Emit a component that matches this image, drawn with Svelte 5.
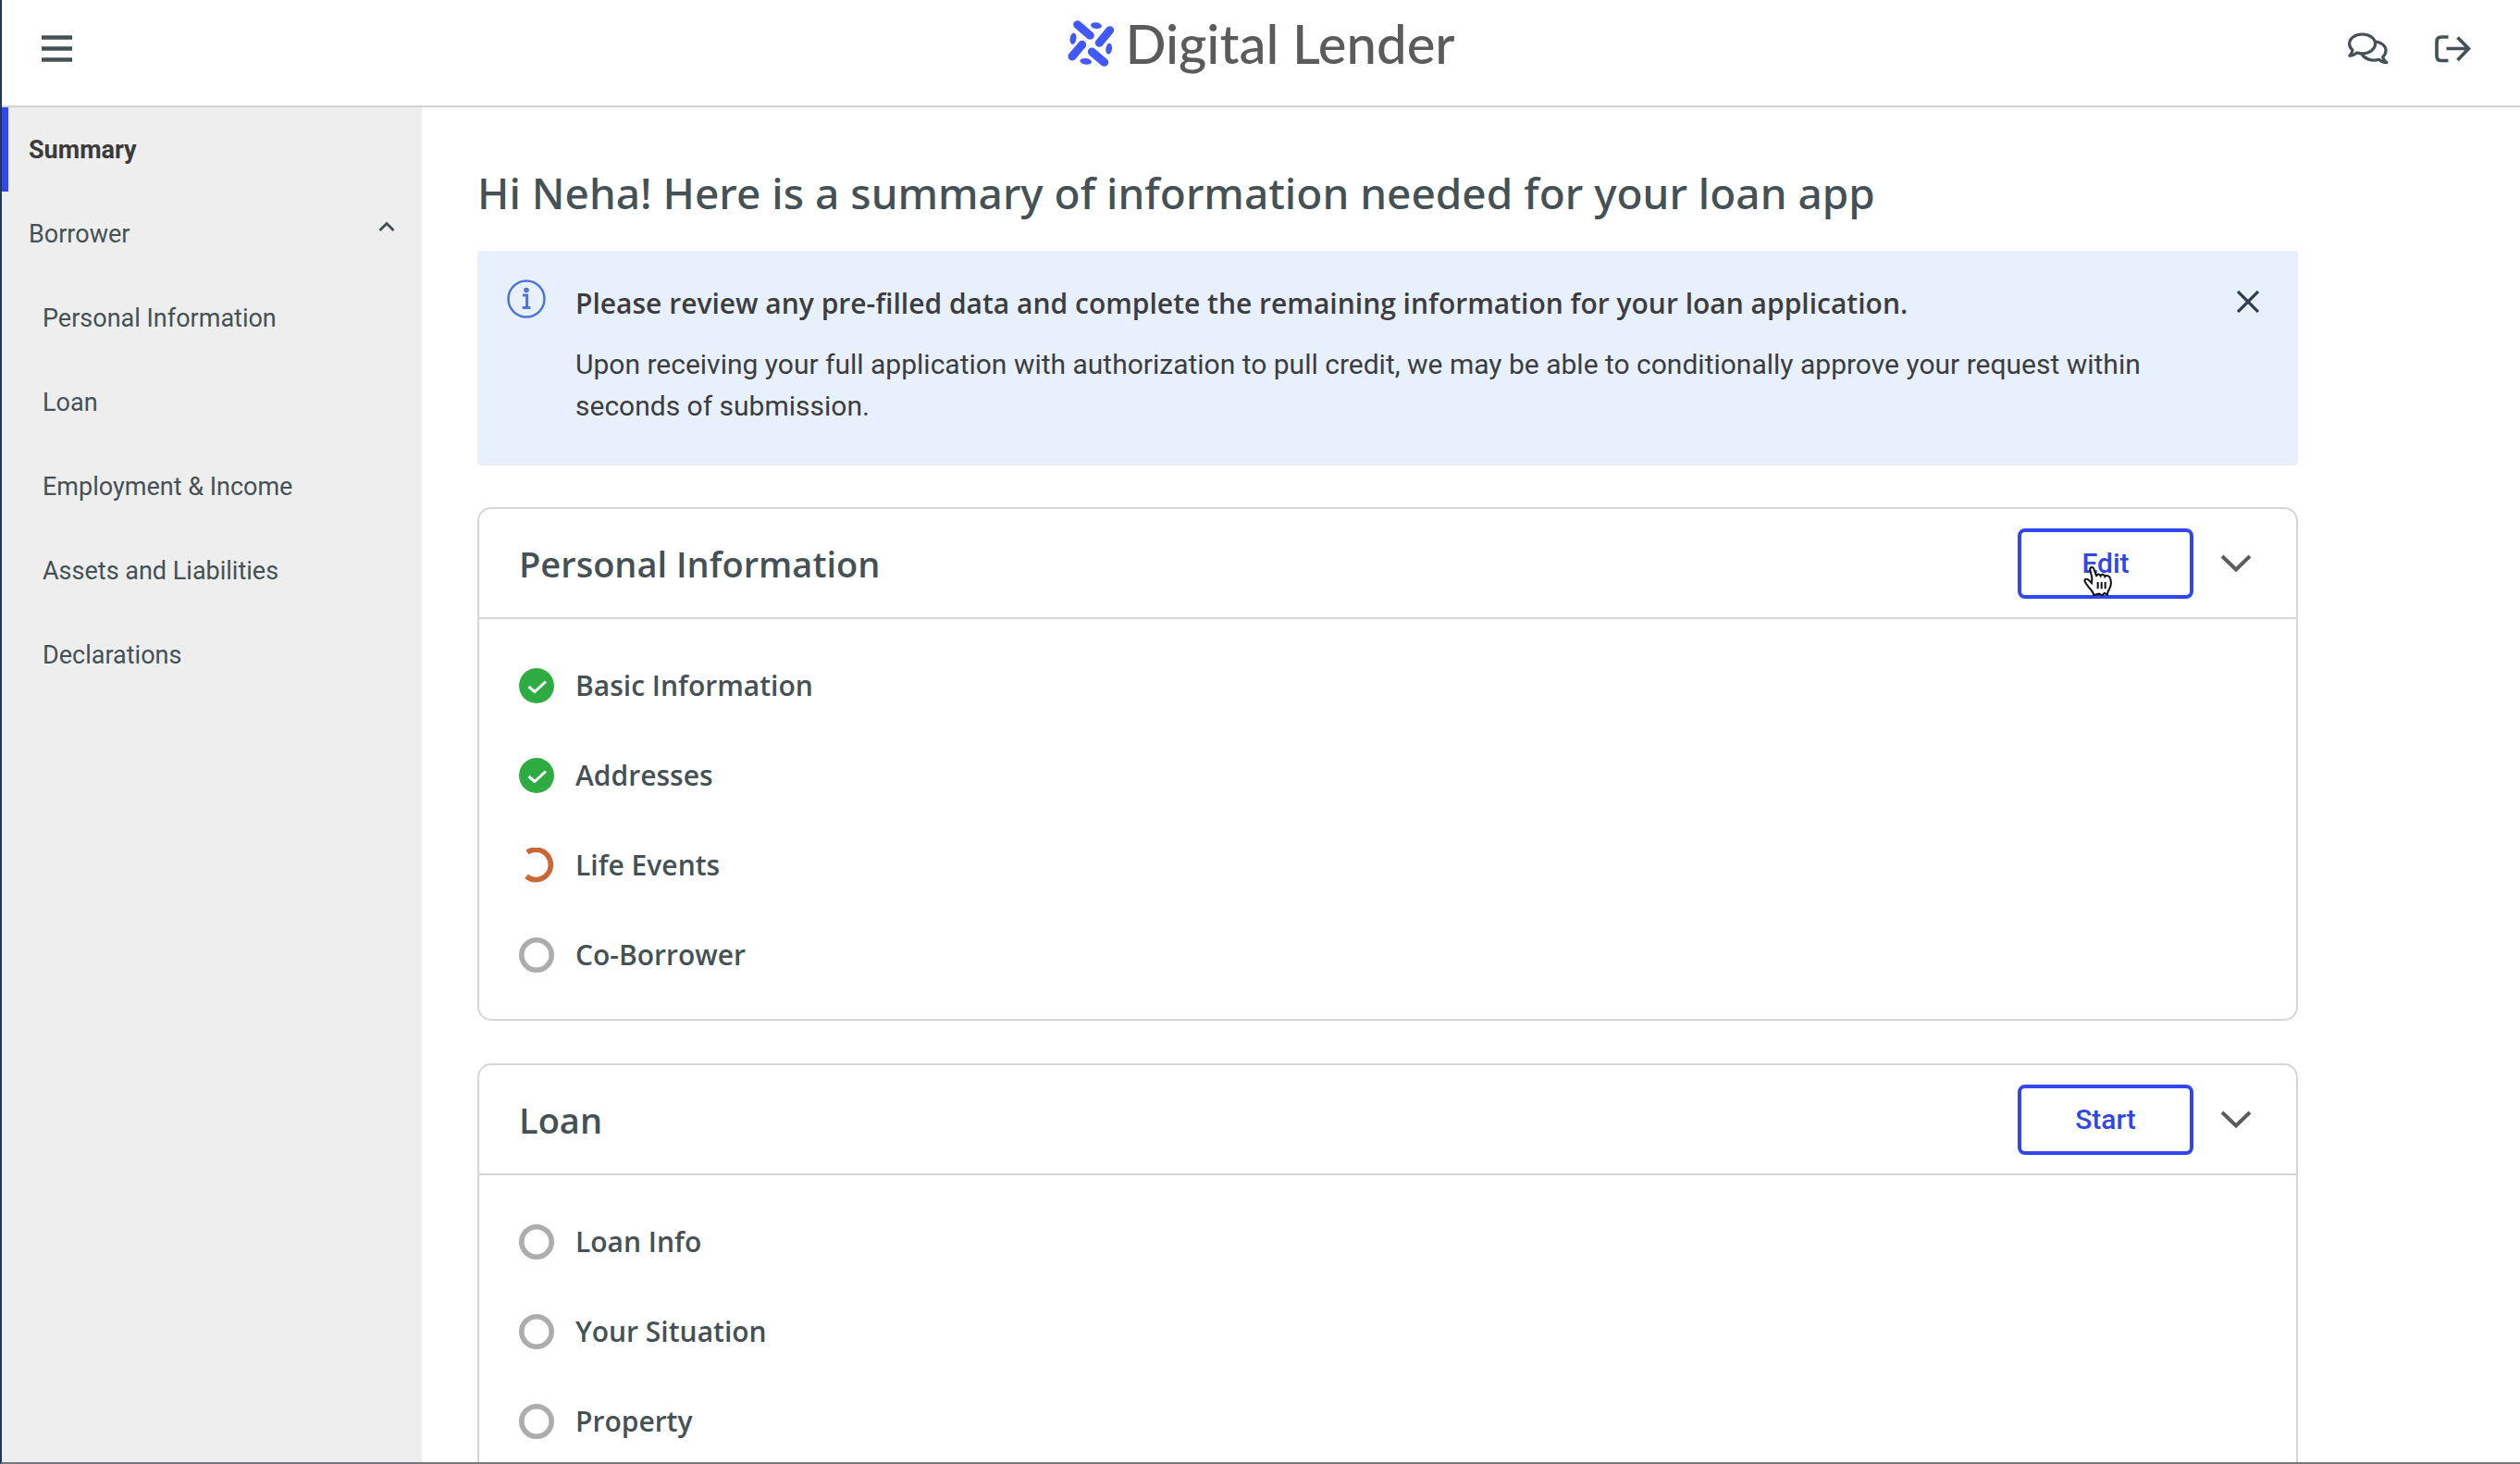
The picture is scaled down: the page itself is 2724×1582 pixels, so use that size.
<script>
  const links = ['Personal Information', 'Loan', 'Employment & Income', 'Assets and Liabilities', 'Declarations'];
  const cards = [
    {
      title: 'Personal Information',
      action: 'Edit',
      items: [
        { label: 'Basic Information', state: 'done' },
        { label: 'Addresses', state: 'done' },
        { label: 'Life Events', state: 'partial' },
        { label: 'Co-Borrower', state: 'todo' }
      ]
    },
    {
      title: 'Loan',
      action: 'Start',
      items: [
        { label: 'Loan Info', state: 'todo' },
        { label: 'Your Situation', state: 'todo' },
        { label: 'Property', state: 'todo' }
      ]
    }
  ];
</script>

<div class="window">
  <header>
    <button class="icon" aria-label="Menu">
      <svg width="34" height="30" viewBox="0 0 34 30"><path d="M0 2.5h33M0 14.5h33M0 26.5h33" stroke-width="4.6" /></svg>
    </button>
    <a class="brand" href="#home">
      <svg width="54" height="54" viewBox="70 62 162 162" aria-hidden="true">
        <g stroke="#4259fa" stroke-width="27" stroke-linecap="round">
          <path d="M105 82l41 35M210 100l-34 41M120 147l-32 38M152 170l40 34" />
        </g>
        <g fill="#4259fa">
          <ellipse cx="166" cy="85" rx="18" ry="10" transform="rotate(8 166 85)" />
          <ellipse cx="91" cy="127" rx="10" ry="19" transform="rotate(8 91 127)" />
          <ellipse cx="207" cy="160" rx="10" ry="18" transform="rotate(8 207 160)" />
          <ellipse cx="132" cy="201" rx="19" ry="10" transform="rotate(8 132 201)" />
        </g>
      </svg>
      <span>Digital Lender</span>
    </a>
    <div class="tools">
      <button class="icon" aria-label="Messages">
        <svg width="44" height="36" viewBox="0 0 44 36" stroke-width="3.2" stroke-linejoin="round">
          <path d="M15.500 2C23.500 2 29.500 6.500 29.500 12.300S23.500 22.800 15.500 22.800C13.500 22.800 11.500 22.500 9.800 21.900C7.500 24 5 25.100 1.800 25.200C3.500 23.200 4.600 21.400 5 19.200C2.800 17.300 1.600 15 1.600 12.300C1.600 6.500 7.600 2 15.500 2Z" />
          <path d="M29.300 9.800C36.200 10.600 41 14.600 41 19.600C41 22.400 39.800 24.700 37.700 26.500C38 28.700 39.400 30.600 41.800 32.500C38.500 32.500 35.500 31.300 33.300 29.300C25.800 31.500 17.800 28.700 14.600 23" />
        </svg>
      </button>
      <button class="icon" aria-label="Sign out">
        <svg width="40" height="30" viewBox="0 0 40 30" stroke-width="3.700">
          <path d="M14.500 2H7Q2 2 2 7v15.500Q2 27.500 7 27.500h7.500M12.500 14.500H36M24.500 2.500L36.500 14.500L24.500 27" />
        </svg>
      </button>
    </div>
  </header>

  <div class="body">
    <nav>
      <a class="active" href="#summary">Summary</a>
      <button class="group" aria-expanded="true">
        Borrower
        <svg width="18" height="24" viewBox="0 0 18 24" stroke-width="3"><path d="M1.500 12L9 4.500L16.500 12" /></svg>
      </button>
      {#each links as link}
        <a class="sub" href="#{link.toLowerCase().replaceAll(' ', '-')}">{link}</a>
      {/each}
    </nav>

    <main>
      <h1>Hi Neha! Here is a summary of information needed for your loan app</h1>

      <section class="notice">
        <svg class="info" width="42" height="42" viewBox="0 0 42 42" aria-hidden="true">
          <circle cx="21" cy="21" r="19.500" />
          <circle class="fill" cx="21" cy="11.500" r="2.800" />
          <path d="M17 17h4.600v13.500M16.800 30.500h8.600" />
        </svg>
        <div class="message">
          <h2>Please review any pre-filled data and complete the remaining information for your loan application.</h2>
          <p>Upon receiving your full application with authorization to pull credit, we may be able to conditionally approve your request within seconds of submission.</p>
        </div>
        <button class="icon close" aria-label="Dismiss">
          <svg width="24" height="24" viewBox="0 0 24 24" stroke-width="3.200"><path d="M1 1l22 22M23 1L1 23" /></svg>
        </button>
      </section>

      {#each cards as card}
        <section class="card">
          <div class="top">
            <h2>{card.title}</h2>
            <div class="act">
              <button class="action">{card.action}</button>
              {#if card.action === 'Edit'}
                <svg class="pointer" width="34" height="36" viewBox="0 0 102 108" aria-hidden="true">
                  <path d="M22 14C20 6 30 2 34 11L43 36C42 28 51 25 56 34C58 27 68 27 70 36C75 30 86 34 88 44C91 56 89 68 84 77C80 83 78 88 78 94L68 90L61 97L51 92L34 96C32 84 22 77 14 66C9 59 4 54 4 49C5 42 14 43 19 49L27 57L28 40Z" />
                  <path d="M47 54v22M59 54v22M71 54v22" />
                </svg>
              {/if}
            </div>
            <button class="toggle" aria-label="Toggle {card.title}">
              <svg width="34" height="20" viewBox="0 0 34 20" stroke-width="4"><path d="M2 2L17 16.500L32 2" /></svg>
            </button>
          </div>
          <ul>
            {#each card.items as item}
              <li>
                <svg width="38" height="38" viewBox="0 0 38 38" aria-hidden="true">
                  {#if item.state === 'done'}
                    <circle cx="19" cy="19" r="19" fill="#2fac41" />
                    <path d="M10.500 20L17 25.500L29 14.500" stroke="#fff" stroke-width="3" />
                  {:else if item.state === 'partial'}
                    <path d="M9 5A16.200 16.200 0 1 1 8 31" stroke="#cb6636" stroke-width="5.600" />
                  {:else}
                    <circle cx="19" cy="19" r="16.200" stroke="#adadad" stroke-width="5.600" />
                  {/if}
                </svg>
                {item.label}
              </li>
            {/each}
          </ul>
        </section>
      {/each}
    </main>
  </div>
</div>

<style>
  :global(body) {
    background: #fff;
  }
  .window {
    box-sizing: border-box;
    height: 100vh;
    display: flex;
    flex-direction: column;
    overflow: hidden;
    border-left: 2px solid #22375c;
    border-bottom: 2px solid #77787b;
    color: #455154;
    font-family: Roboto, 'Liberation Sans', sans-serif;
    font-size: 27px;
  }
  button {
    border: 0;
    padding: 0;
    background: none;
    color: inherit;
    font: inherit;
    cursor: pointer;
  }
  a {
    color: inherit;
    text-decoration: none;
  }
  h1, h2, p, ul {
    margin: 0;
    padding: 0;
  }
  svg {
    display: block;
    flex: none;
    fill: none;
  }
  .icon svg, .group svg {
    stroke: #455154;
  }
  header {
    flex: none;
    display: grid;
    grid-template-columns: 1fr auto 1fr;
    align-items: center;
    height: 105px;
    padding: 0 43px 9px;
    border-bottom: 2px solid #d3d3d3;
  }
  .icon {
    justify-self: start;
  }
  .brand {
    display: flex;
    align-items: center;
    gap: 9px;
    padding-bottom: 11px;
    color: #5b5b5b;
    font-family: Lato, sans-serif;
    font-size: 58px;
    font-weight: 500;
    line-height: 60px;
  }
  .tools {
    display: flex;
    justify-content: flex-end;
    align-items: center;
    gap: 50px;
    padding-right: 9px;
  }
  .body {
    flex: 1;
    min-height: 0;
    display: flex;
  }
  nav {
    flex: none;
    width: 454px;
    background: #eee;
  }
  nav a, .group {
    box-sizing: border-box;
    display: flex;
    align-items: center;
    width: 100%;
    height: 91px;
    padding: 0 29px;
  }
  nav .active {
    padding-left: 22px;
    border-left: 7px solid #3146f5;
    color: #3b3b3b;
    font-weight: 700;
  }
  .group {
    justify-content: space-between;
  }
  .group svg {
    margin-bottom: 8px;
  }
  nav .sub {
    padding-left: 44px;
  }
  main {
    flex: 1;
    min-width: 0;
    padding: 60px 240px 0 60px;
  }
  h2, li {
    font-family: 'Open Sans', 'Noto Sans', sans-serif;
    font-weight: 600;
  }
  h1 {
    margin-bottom: 31px;
    font-family: 'Noto Sans', 'Open Sans', sans-serif;
    font-size: 46px;
    font-weight: 500;
    line-height: 64px;
  }
  .notice {
    display: flex;
    align-items: flex-start;
    margin-bottom: 45px;
    padding: 31px 42px 42px 32px;
    border-radius: 4px;
    background: #e8f0fc;
    color: #3b3d40;
  }
  .info {
    margin-right: 32px;
    stroke: #4d74dc;
    stroke-width: 2.500;
  }
  .info .fill {
    fill: #4d74dc;
    stroke: none;
  }
  .info path {
    stroke-width: 3;
  }
  .message {
    flex: 1;
  }
  .notice h2 {
    margin-bottom: 17px;
    font-size: 30px;
    line-height: 52px;
  }
  .notice p {
    margin-right: 60px;
    font-size: 30px;
    line-height: 45px;
  }
  .close {
    padding: 12px 0;
  }
  .close svg {
    stroke: #2c3d4f;
  }
  .card {
    margin-bottom: 46px;
    border: 2px solid #d6d6d6;
    border-radius: 15px;
  }
  .top {
    display: flex;
    align-items: center;
    height: 117px;
    padding: 0 48px 0 43px;
    border-bottom: 2px solid #d6d6d6;
  }
  .top h2 {
    flex: 1;
    font-size: 38px;
  }
  .act {
    position: relative;
    margin-right: 29px;
  }
  .action {
    width: 190px;
    height: 76px;
    border: 4px solid #3146f0;
    border-radius: 8px;
    color: #3146e6;
    font-size: 30px;
    font-weight: 500;
  }
  .pointer {
    position: absolute;
    top: 40px;
    left: 71px;
    fill: #fff;
    stroke: #111;
    stroke-width: 6;
  }
  .toggle svg {
    stroke: #5c5c5c;
  }
  ul {
    padding: 23px 43px 21px;
    list-style: none;
  }
  li {
    display: flex;
    align-items: center;
    gap: 23px;
    height: 97px;
    font-size: 30px;
  }
</style>
